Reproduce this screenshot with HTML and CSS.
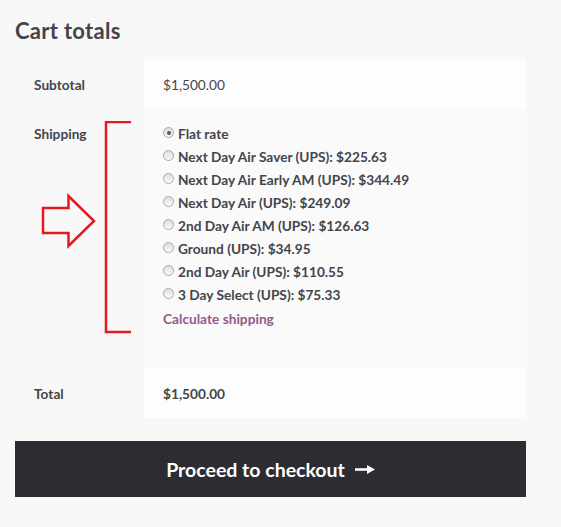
FILE: index.html
```html
<!DOCTYPE html>
<html>
<head>
<meta charset="utf-8">
<link rel="stylesheet" href="styles.css">
</head>
<body>
<div class="page">
  <h2 class="title">Cart totals</h2>
  <table class="totals">
    <tr class="row-sub">
      <th>Subtotal</th>
      <td>$1,500.00</td>
    </tr>
    <tr class="row-ship">
      <th>Shipping</th>
      <td>
        <ul class="methods">
          <li><span class="radio checked"></span><span class="opt">Flat rate</span></li>
          <li><span class="radio"></span><span class="opt">Next Day Air Saver (UPS): $225.63</span></li>
          <li><span class="radio"></span><span class="opt">Next Day Air Early AM (UPS): $344.49</span></li>
          <li><span class="radio"></span><span class="opt">Next Day Air (UPS): $249.09</span></li>
          <li><span class="radio"></span><span class="opt">2nd Day Air AM (UPS): $126.63</span></li>
          <li><span class="radio"></span><span class="opt">Ground (UPS): $34.95</span></li>
          <li><span class="radio"></span><span class="opt">2nd Day Air (UPS): $110.55</span></li>
          <li><span class="radio"></span><span class="opt">3 Day Select (UPS): $75.33</span></li>
        </ul>
        <a class="calc" href="#">Calculate shipping</a>
      </td>
    </tr>
    <tr class="row-total">
      <th>Total</th>
      <td><strong>$1,500.00</strong></td>
    </tr>
  </table>
  <a class="checkout" href="#">Proceed to checkout
    <svg class="arr" width="20" height="9" viewBox="0 0 20 9"><path d="M0 3.2H13V5.8H0Z" fill="#fff"/><path d="M12 0L20 4.5L12 9Z" fill="#fff"/></svg>
  </a>

  <svg class="annot" width="140" height="220" viewBox="0 0 140 220">
    <polyline points="131,1 106,1 106,211 131,211" fill="none" stroke="#e5171f" stroke-width="2.5"/>
    <polygon points="43,87 68.5,87 68.5,75 94,100 68.5,125 68.5,112 43,112" fill="none" stroke="#e5171f" stroke-width="2.5"/>
  </svg>
</div>
</body>
</html>
```
FILE: styles.css
```css
html, body {
  margin: 0;
  padding: 0;
  background: #f8f8f8;
}
.page {
  position: relative;
  padding: 15px 35px 30px 15px;
  font-family: Lato, "Noto Sans", sans-serif;
  color: #43454b;
}
.title {
  margin: 0 0 12px;
  font-size: 22px;
  line-height: 32px;
  font-weight: 700;
  color: #43454b;
  letter-spacing: 0.3px;
}
.totals {
  width: 511px;
  border-collapse: collapse;
  font-size: 13.7px;
}
.totals th {
  width: 129px;
  box-sizing: border-box;
  text-align: left;
  font-weight: 700;
  padding: 0 0 0 19px;
  background: #f8f8f8;
  vertical-align: middle;
}
.totals td {
  padding: 0 0 0 19px;
  background: #fdfdfd;
  vertical-align: middle;
}
.row-sub th, .row-sub td, .row-total th, .row-total td {
  height: 50px;
}
.row-ship th, .row-ship td {
  vertical-align: top;
  background: #fafafa;
}
.row-ship th {
  background: #f8f8f8;
  padding-top: 16px;
}
.row-ship td {
  padding-top: 13px;
  padding-bottom: 38px;
}
.methods {
  list-style: none;
  margin: 0;
  padding: 0;
}
.methods li {
  display: flex;
  align-items: center;
  height: 23px;
  font-weight: 700;
}
.radio {
  width: 11px;
  height: 11px;
  box-sizing: border-box;
  border: 1px solid #a9a9a9;
  border-radius: 50%;
  background: linear-gradient(#dedede, #fafafa);
  margin: 0 4px 0 0;
  position: relative;
  top: -1px;
}
.radio.checked::after {
  content: "";
  position: absolute;
  left: 2.5px;
  top: 2.5px;
  width: 4px;
  height: 4px;
  border-radius: 50%;
  background: #555;
}
.calc {
  display: block;
  margin-top: 1px;
  height: 23px;
  line-height: 23px;
  font-weight: 700;
  color: #96588a;
  text-decoration: none;
}
.checkout {
  display: flex;
  justify-content: center;
  align-items: center;
  gap: 10px;
  width: 511px;
  height: 56px;
  margin-top: 23px;
  background: #2c2d33;
  color: #fff;
  font-size: 19.5px;
  font-weight: 700;
  text-decoration: none;
}
.arr {
  display: block;
  margin-top: 1px;
}
.annot {
  position: absolute;
  left: 0;
  top: 121px;
  pointer-events: none;
}
```
